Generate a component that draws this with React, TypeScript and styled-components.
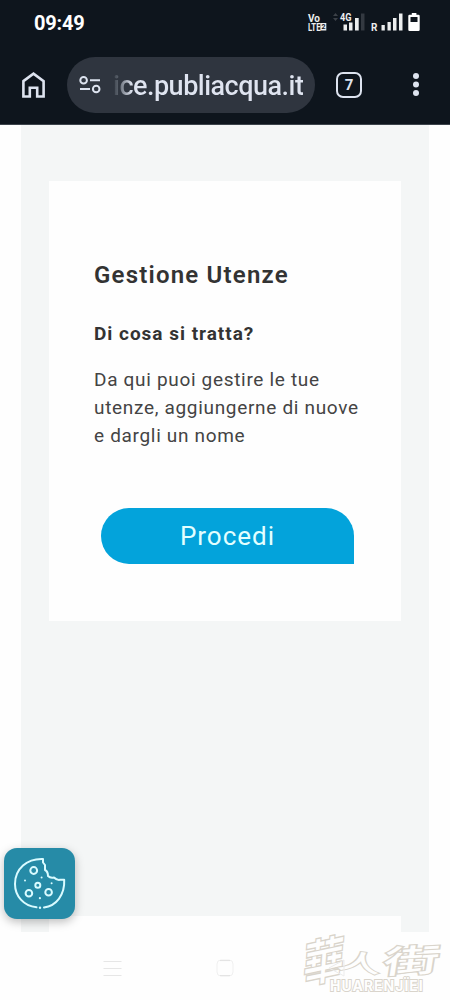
import React from "react";
import styled, { createGlobalStyle } from "styled-components";

const GlobalStyle = createGlobalStyle`
  * { box-sizing: border-box; }
  body { margin: 0; background: #fefefe; font-family: Roboto, "Liberation Sans", sans-serif; }
  h2, h3, p { margin: 0; }
  svg { display: block; }
`;

const Screen = styled.div`
  position: relative;
  display: flex;
  flex-direction: column;
  width: 450px;
  height: 1000px;
  overflow: hidden;
  background: #fefefe;
`;

const TopArea = styled.header`
  height: 125px;
  flex: none;
  background: #0e151d;
  border-bottom: 1px solid #3c434b;
`;

const StatusBar = styled.div`
  display: flex;
  justify-content: space-between;
  height: 56px;
  padding: 11px 30px 0 34px;
`;

const Clock = styled.span`
  font-size: 20px;
  line-height: 24px;
  font-weight: 700;
  letter-spacing: -0.2px;
  color: #fff;
`;

const Toolbar = styled.div`
  display: flex;
  align-items: center;
  height: 57px;
  padding-left: 20px;
`;

const IconButton = styled.button<{ $gap: number }>`
  display: flex;
  padding: 0;
  border: 0;
  background: none;
  margin-left: ${(p) => p.$gap}px;
`;

const AddressPill = styled.div`
  display: flex;
  align-items: center;
  width: 248px;
  height: 56px;
  margin-left: 20px;
  padding-left: 12px;
  border-radius: 28px;
  background: #2f353f;
`;

const Url = styled.span`
  margin-left: 12px;
  padding-top: 2px;
  font-size: 27px;
  line-height: 32px;
  font-weight: 500;
  letter-spacing: -0.5px;
  white-space: nowrap;
  color: transparent;
  background: linear-gradient(90deg, #3a414b 0, #59606a 5px, #dfe4f0 19px);
  -webkit-background-clip: text;
  background-clip: text;
`;

const TabCount = styled.button`
  display: flex;
  align-items: center;
  justify-content: center;
  width: 26px;
  height: 26px;
  margin-left: 21px;
  padding: 0;
  border: 2.6px solid #dde3ef;
  border-radius: 7px;
  background: none;
  color: #dde3ef;
  font: 700 15px/20px Roboto, sans-serif;
`;

const Content = styled.main`
  display: flex;
  flex-direction: column;
  justify-content: space-between;
  width: 408px;
  height: 807px;
  flex: none;
  margin: 0 auto;
  padding: 56px 28px 0;
  background: #f4f6f6;
`;

const Card = styled.section`
  height: 440px;
  padding: 78px 40px 0 45px;
  background: #fefefe;
`;

const NextCard = styled.section`
  height: 16px;
  background: #fefefe;
`;

const Title = styled.h2`
  font-size: 24px;
  line-height: 32px;
  font-weight: 600;
  letter-spacing: 1.2px;
  color: #333;
  white-space: nowrap;
`;

const Subtitle = styled.h3`
  margin-top: 29px;
  font-size: 19px;
  line-height: 28px;
  font-weight: 700;
  letter-spacing: 0.98px;
  color: #333;
  white-space: nowrap;
`;

const Copy = styled.p`
  margin-top: 18px;
  font-size: 19px;
  line-height: 28px;
  letter-spacing: 0.68px;
  color: #444;
  white-space: nowrap;
`;

const Proceed = styled.button`
  display: block;
  width: 253px;
  height: 56px;
  margin: 58px 0 0 7px;
  padding: 0;
  border: 0;
  border-radius: 28px 28px 0 28px;
  background: #03a3db;
  color: #e2ffff;
  font: 400 26px/56px Roboto, sans-serif;
  letter-spacing: 1px;
`;

const CookieButton = styled.button`
  position: absolute;
  left: 4px;
  top: 848px;
  display: flex;
  width: 71px;
  height: 71px;
  padding: 0;
  border: 0;
  border-radius: 13px;
  background: #268ba7;
  box-shadow: 0 3px 10px rgba(0, 0, 0, 0.26);
`;

const NavBar = styled.nav`
  display: flex;
  align-items: center;
  height: 68px;
  padding: 3px 0 0 103px;
`;

const NavIcon = styled.span<{ $gap: number }>`
  position: relative;
  z-index: 1;
  margin-right: ${(p) => p.$gap}px;
`;

const Watermark = styled.div`
  position: absolute;
  left: 300px;
  top: 931px;
  width: 145px;
  height: 64px;
  color: #fefefe;
  paint-order: stroke fill;
  -webkit-text-stroke: 2.6px #d9d4cb;
`;

const WatermarkGlyph = styled.span<{ $x: number; $y: number; $size: number; $shape: string }>`
  position: absolute;
  left: ${(p) => p.$x}px;
  top: ${(p) => p.$y}px;
  font: 500 ${(p) => p.$size}px/1 "Noto Sans CJK TC", sans-serif;
  transform: ${(p) => p.$shape};
`;

const WatermarkLatin = styled.span`
  position: absolute;
  left: 30px;
  top: 48px;
  font: 700 14px/14px Inter, sans-serif;
  letter-spacing: 1px;
  -webkit-text-stroke: 1.8px #d9d4cb;
`;

const StatusIcons = () => (
  <svg width="115" height="24" viewBox="305 11 115 24" fill="#eceeef" fontFamily="Roboto, sans-serif">
    <text x="308" y="22" fontSize="10" fontWeight="700">Vo</text>
    <text x="308" y="30.5" fontSize="10" fontWeight="700" textLength="12.5" lengthAdjust="spacingAndGlyphs">LTE</text>
    <rect x="320.3" y="23" width="6" height="7.5" />
    <text x="321.4" y="29.4" fontSize="7" fontWeight="700" fill="#0e151d">2</text>
    <path d="M333 16l2.5-3 2.5 3zM333 18l2.5 3 2.5-3z" fill="#3c4148" />
    <text x="340" y="20.8" fontSize="10.5" fontWeight="700" textLength="11.5" lengthAdjust="spacingAndGlyphs">4G</text>
    <path d="M343.5 24.5h3.5v6h-3.5zM349 22.5h3.5v8H349zM355 18h3.7v12.5H355z" />
    <path d="M361 13.5h3.5v17H361z" fill="#333941" />
    <text x="371" y="30.5" fontSize="10" fontWeight="700">R</text>
    <path d="M381.5 25h3.3v5.5h-3.3zM387.5 22h3.3v8.5h-3.3zM393 18h3.5v12.5H393zM399 13.5h3.5v17H399z" />
    <path fillRule="evenodd" fill="#fff" d="M411.8 13h4.6v1.8h2.1q1.2 0 1.2 1.2v13.7q0 1.2-1.2 1.2h-9q-1.2 0-1.2-1.2V16q0-1.2 1.2-1.2h2.3zM410.5 17v5h7v-5z" />
  </svg>
);

const HomeIcon = () => (
  <svg width="27" height="28" viewBox="0 0 27 28" fill="none" stroke="#dde3ef" strokeWidth="2.6">
    <path d="M3.4 10.1 13.5 2.6l10.1 7.5v15.4h-6.4v-8.8H9.8v8.8H3.4z" />
  </svg>
);

const SiteSettingsIcon = () => (
  <svg width="22" height="20" viewBox="0 0 22 20" fill="none" stroke="#dde3ef" strokeWidth="2">
    <circle cx="4.6" cy="5.2" r="3.3" />
    <circle cx="17.2" cy="14" r="3.3" />
    <path d="M11 5.2h10M1 14h10" />
  </svg>
);

const MoreIcon = () => (
  <svg width="8" height="26" viewBox="0 0 8 26" fill="#dde3ef">
    <circle cx="4" cy="4" r="3" />
    <circle cx="4" cy="12.5" r="3" />
    <circle cx="4" cy="21" r="3" />
  </svg>
);

const CookieIcon = () => (
  <svg width="71" height="71" viewBox="0 0 71 71" fill="none" stroke="#d9fbff" strokeWidth="2" strokeLinejoin="round" strokeLinecap="round">
    <path d="M32.5 59.3C19.5 58 11 48 11 36 11 21 23 10.3 39 11v3.5l2 2.5v5q3 1.5 3 6 2.5 2.5 6 1.5 3 3 6 2.3h4.2C61 47 52 58 40 59.4" />
    <circle cx="29.7" cy="22.5" r="3.4" />
    <circle cx="33.8" cy="37.3" r="2.5" />
    <circle cx="24.9" cy="45.2" r="3.3" />
    <circle cx="44.6" cy="44.3" r="3.3" />
    <g fill="#d9fbff" stroke="none">
      <circle cx="21" cy="32.5" r="1" />
      <circle cx="37.6" cy="29.5" r="1" />
      <circle cx="47.6" cy="35.3" r="1" />
      <circle cx="35.9" cy="50.2" r="1.1" />
      <circle cx="36" cy="59.8" r="1.2" />
    </g>
  </svg>
);

export default function App() {
  return (
    <Screen>
      <GlobalStyle />
      <TopArea>
        <StatusBar>
          <Clock>09:49</Clock>
          <StatusIcons />
        </StatusBar>
        <Toolbar>
          <IconButton $gap={0} aria-label="Home"><HomeIcon /></IconButton>
          <AddressPill>
            <SiteSettingsIcon />
            <Url>ice.publiacqua.it</Url>
          </AddressPill>
          <TabCount>7</TabCount>
          <IconButton $gap={50} aria-label="Menu"><MoreIcon /></IconButton>
        </Toolbar>
      </TopArea>
      <Content>
        <Card>
          <Title>Gestione Utenze</Title>
          <Subtitle>Di cosa si tratta?</Subtitle>
          <Copy>
            Da qui puoi gestire le tue<br />
            utenze, aggiungerne di nuove<br />
            e dargli un nome
          </Copy>
          <Proceed>Procedi</Proceed>
        </Card>
        <NextCard />
      </Content>
      <NavBar>
        <NavIcon $gap={94}>
          <svg width="19" height="20" viewBox="0 0 19 20" stroke="#e6e6e6" strokeWidth="1.2">
            <path d="M.5 3.5h18M.5 10.5h18M.5 17.5h18" />
          </svg>
        </NavIcon>
        <NavIcon $gap={94}>
          <svg width="18" height="20" viewBox="0 0 18 20" fill="none" stroke="#f0f0f0">
            <rect x="1" y="2" width="16" height="16" rx="4" />
            <path d="M4 2.6h10M4 17.6h10" stroke="#e2e2e2" />
          </svg>
        </NavIcon>
        <NavIcon $gap={0}>
          <svg width="18" height="20" viewBox="0 0 18 20" fill="none" stroke="#ececec">
            <path d="M16 2v16L1 10z" />
          </svg>
        </NavIcon>
      </NavBar>
      <CookieButton aria-label="Cookie"><CookieIcon /></CookieButton>
      <Watermark>
        <WatermarkGlyph $x={3} $y={6} $size={42} $shape="rotate(-12deg) skewX(-16deg) scale(0.98, 1.13)">華</WatermarkGlyph>
        <WatermarkGlyph $x={43} $y={12} $size={36} $shape="rotate(8deg) skewX(-10deg) scale(1.2, 0.62)">人</WatermarkGlyph>
        <WatermarkGlyph $x={94} $y={9} $size={36} $shape="rotate(-3deg) skewX(-12deg) scale(1.55, 0.88)">街</WatermarkGlyph>
        <WatermarkLatin>HUARENJÏEI</WatermarkLatin>
      </Watermark>
    </Screen>
  );
}
